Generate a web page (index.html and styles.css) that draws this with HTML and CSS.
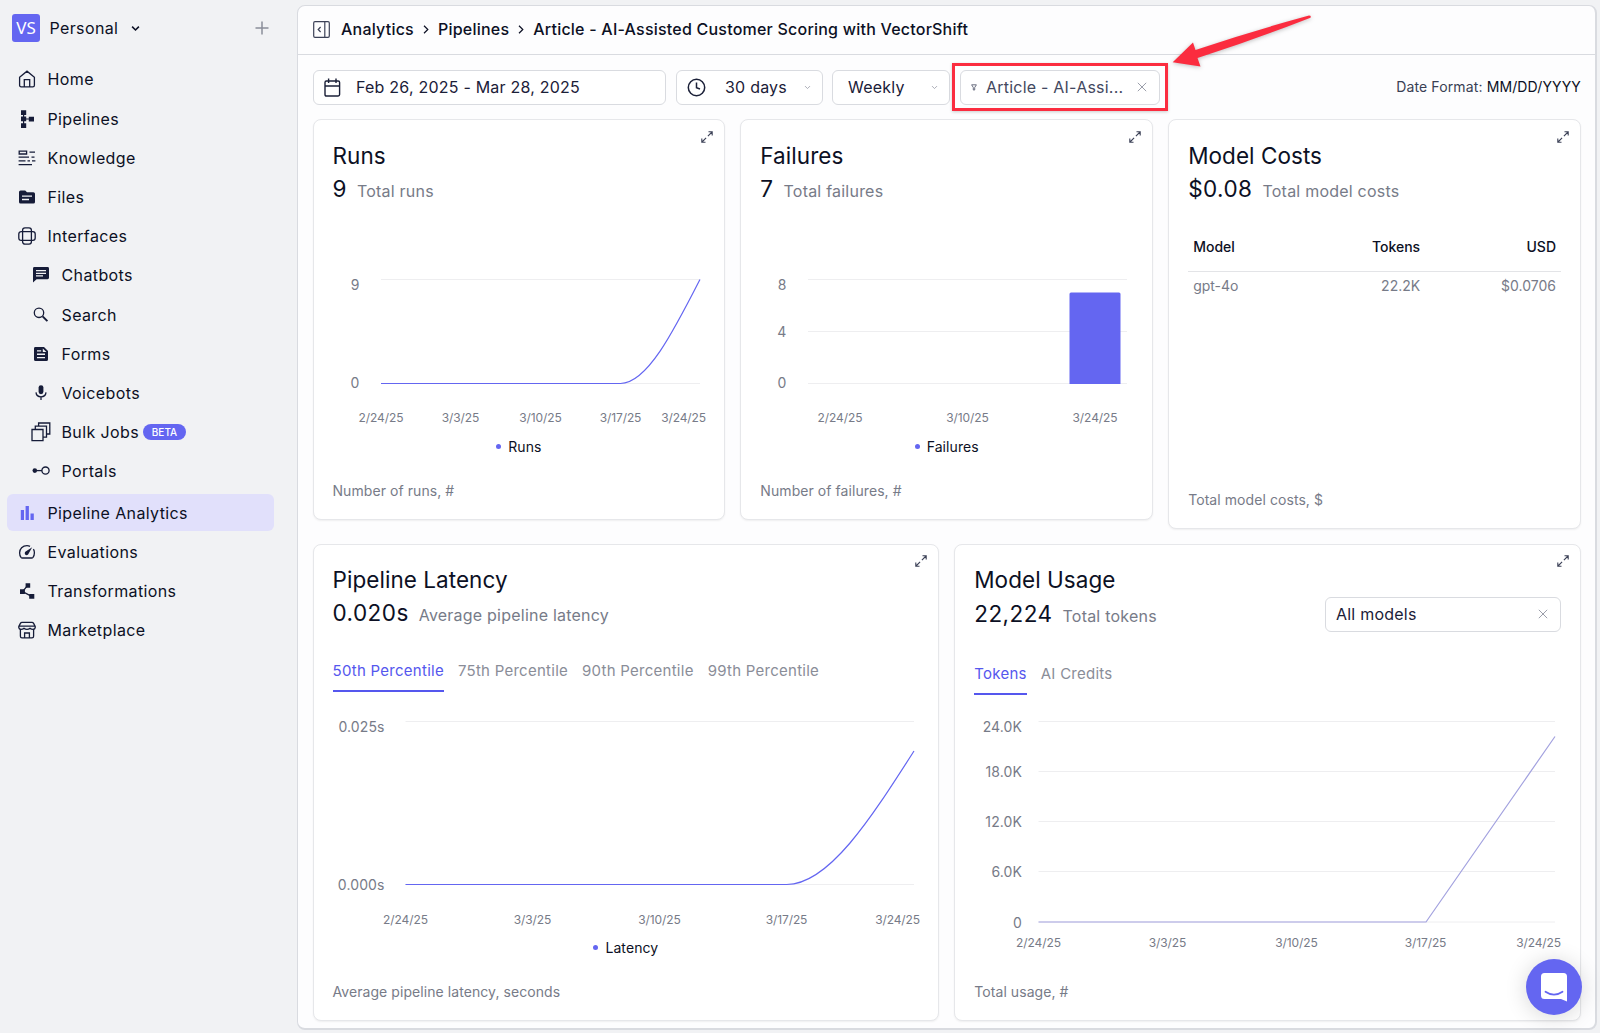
FILE: index.html
```html
<!DOCTYPE html>
<html lang="en">
<head>
    <meta charset="UTF-8">
    <meta name="viewport" content="width=device-width, initial-scale=1.0">
    <title>Pipeline Analytics</title>
    <link rel="stylesheet" href="styles.css">
</head>
<body>
    <svg class="sprite" width="0" height="0">
        <symbol id="expand" viewBox="0 0 12 12">
            <path d="M7.5 .8H11.2V4.5M11 1L6.9 5.1M.8 7.5V11.2H4.5M1 11L5.1 6.9"/>
        </symbol>
        <symbol id="close" viewBox="0 0 10 10">
            <path d="M.8 .8L9.2 9.2M9.2 .8L.8 9.2"/>
        </symbol>
        <symbol id="chevron" viewBox="0 0 8 6">
            <path d="M1 1.3L4 4.3L7 1.3"/>
        </symbol>
    </svg>

    <aside class="sidebar">
        <div class="workspace">
            <span class="logo">VS</span>
            <span class="workspace-name">Personal</span>
            <svg class="workspace-chevron" width="9" height="7"><use href="#chevron"/></svg>
            <svg class="workspace-add" width="14" height="14" viewBox="0 0 14 14"><path d="M7 .5V13.5M.5 7H13.5"/></svg>
        </div>
        <nav>
            <a class="nav-item">
                <svg class="line" viewBox="0 0 18 18"><path d="M1.6 7.2L9 1.2L16.4 7.2V15.2Q16.4 16.8 14.8 16.8H3.2Q1.6 16.8 1.6 15.2ZM6.3 16.8V9.6H11.7V16.8"/></svg>
                <span>Home</span>
            </a>
            <a class="nav-item">
                <svg class="solid" viewBox="0 0 18 18"><path d="M3 .3H8.2V5H6.2V6.6H8.2V8.4H10.8V6.8H16V11.4H10.8V9.6H8.2V11.3H6.2V13.2H8.2V17.9H3V13.2H5V11.3H3V6.6H5V5H3Z"/></svg>
                <span>Pipelines</span>
            </a>
            <a class="nav-item">
                <svg class="line" viewBox="0 0 18 18"><path d="M1.2 2.2H8.6V5H1.2ZM11.5 3.2H17M.6 8.2H11M13.5 8.2H16.5M.6 11.8H7.5M9.5 11.8H12M14 11.8H17.4M.6 15.6H14"/></svg>
                <span>Knowledge</span>
            </a>
            <a class="nav-item">
                <svg class="solid" viewBox="0 0 18 18"><path fill-rule="evenodd" d="M2.6 2.4H7.2L9 4.2H15.4Q17 4.2 17 5.8V14Q17 15.6 15.4 15.6H2.6Q1 15.6 1 14V4Q1 2.4 2.6 2.4ZM4 7.4V8.8H14V7.4ZM4 10.8V12.2H11V10.8Z"/></svg>
                <span>Files</span>
            </a>
            <a class="nav-item">
                <svg class="line" viewBox="0 0 18 18"><rect x="4.6" y=".8" width="8.8" height="16.4" rx="2.4"/><rect x=".8" y="4.6" width="16.4" height="8.8" rx="2.4"/></svg>
                <span>Interfaces</span>
            </a>
            <a class="nav-item sub">
                <svg class="solid" viewBox="0 0 18 18"><path fill-rule="evenodd" d="M2.4 1H15.6Q17 1 17 2.4V11.8Q17 13.2 15.6 13.2H4.6L1 16.6V2.4Q1 1 2.4 1ZM4 4V5.2H14V4ZM4 6.7V7.9H14V6.7ZM4 9.3V10.5H11V9.3Z"/></svg>
                <span>Chatbots</span>
            </a>
            <a class="nav-item sub">
                <svg class="line" viewBox="0 0 18 18"><circle cx="7" cy="6.8" r="4.7"/><path d="M10.6 10.4L15.4 15.2" stroke-width="1.9"/></svg>
                <span>Search</span>
            </a>
            <a class="nav-item sub">
                <svg class="solid" viewBox="0 0 18 18"><path fill-rule="evenodd" d="M3.4 2H12L16 6V14.4Q16 16 14.4 16H3.6Q2 16 2 14.4V3.4Q2 2 3.4 2ZM5 5.2V6.5H9.2V5.2ZM5 8.6V9.9H13V8.6ZM5 11.9V13.2H13V11.9ZM10.8 3.4V7H14.4Z"/></svg>
                <span>Forms</span>
            </a>
            <a class="nav-item sub">
                <svg class="line" viewBox="0 0 18 18"><rect class="filled" x="6.6" y="1.2" width="4.8" height="9" rx="2.4"/><path d="M4 8.4Q4.4 12.8 9 12.8Q13.6 12.8 14 8.4M9 12.8V16"/></svg>
                <span>Voicebots</span>
            </a>
            <a class="nav-item sub">
                <svg class="line wide" viewBox="0 0 20 20"><path d="M1 7.5H12V18.6H1ZM4.3 7.5V4.2H15.5V15.2H12M7.6 4.2V1H18.8V12H15.5"/></svg>
                <span>Bulk Jobs</span>
                <em class="badge">BETA</em>
            </a>
            <a class="nav-item sub">
                <svg class="line" viewBox="0 0 18 18"><circle class="filled" cx="2.8" cy="8.6" r="2.3"/><path d="M4 8.6H10"/><circle cx="13.5" cy="8.6" r="3.6"/></svg>
                <span>Portals</span>
            </a>
            <a class="nav-item active">
                <svg class="solid" viewBox="0 0 18 18"><path d="M2.8 6H6V16H2.8ZM7.6 2H10.9V16H7.6ZM12.5 9.5H15.8V16H12.5Z"/></svg>
                <span>Pipeline Analytics</span>
            </a>
            <a class="nav-item">
                <svg class="line" viewBox="0 0 18 18"><path d="M12 3.3Q10.6 2.6 9 2.6C4.5 2.6 1.6 6 1.6 9.8Q1.6 12.6 3 14.4Q3.5 15 4.4 15H13.6Q14.5 15 15 14.4Q16.4 12.6 16.4 9.8Q16.4 7.8 15.4 6.2"/><path class="filled" d="M14.2 4.2L10.4 11A1.9 1.9 0 1 1 7.7 8.6Z"/></svg>
                <span>Evaluations</span>
            </a>
            <a class="nav-item">
                <svg class="line" viewBox="0 0 18 18"><path d="M9.7 3.4L4.6 9.6L13.6 14.4"/><path class="filled" d="M7.6 1.2H12.2V5.7H7.6ZM2 7.2H6.9V11.9H2ZM11.2 12H16.3V16.8H11.2Z"/></svg>
                <span>Transformations</span>
            </a>
            <a class="nav-item">
                <svg class="line" viewBox="0 0 18 18"><path d="M4 1.4H14Q15 1.4 15.6 2.4L17.2 5.4V6.6Q17 8.2 15 8.4Q13.4 8.4 12 7.4Q10.6 8.4 9 8.4Q7.4 8.4 6 7.4Q4.6 8.4 3 8.4Q1 8.2 .8 6.6V5.4L2.4 2.4Q3 1.4 4 1.4ZM.9 5.2H17M2.4 8.6V15.2Q2.4 16.9 4 16.9H14Q15.6 16.9 15.6 15.2V8.6M6.6 16.9V12H11.4V16.9"/></svg>
                <span>Marketplace</span>
            </a>
        </nav>
    </aside>

    <main class="panel">
        <header class="breadcrumbs">
            <svg class="collapse" width="17" height="17" viewBox="0 0 17 17"><path d="M.7 2Q.7 .7 2 .7H15Q16.3 .7 16.3 2V15Q16.3 16.3 15 16.3H2Q.7 16.3 .7 15ZM11.8 .7V16.3M7.6 6L5.2 8.5L7.6 11"/></svg>
            <span>Analytics</span>
            <svg class="crumb-sep" width="6" height="9" viewBox="0 0 6 9"><path d="M1 .8L4.8 4.5L1 8.2"/></svg>
            <span>Pipelines</span>
            <svg class="crumb-sep" width="6" height="9" viewBox="0 0 6 9"><path d="M1 .8L4.8 4.5L1 8.2"/></svg>
            <span>Article - AI-Assisted Customer Scoring with VectorShift</span>
        </header>

        <div class="toolbar">
            <div class="field date-range">
                <svg width="17" height="19" viewBox="0 0 17 19"><path d="M2.4 3H14.2Q15.6 3 15.6 4.4V16.6Q15.6 18 14.2 18H2.4Q1 18 1 16.6V4.4Q1 3 2.4 3ZM1 8H15.6M4.6 .5V5M12 .5V5"/></svg>
                <span>Feb 26, 2025 - Mar 28, 2025</span>
            </div>
            <div class="field period">
                <svg width="19" height="19" viewBox="0 0 19 19"><circle cx="9.5" cy="9.5" r="8.2"/><path d="M9.5 4.5V9.8L13 11"/></svg>
                <span>30 days</span>
                <svg class="arrow" width="7" height="5"><use href="#chevron"/></svg>
            </div>
            <div class="field interval">
                <span>Weekly</span>
                <svg class="arrow" width="7" height="5"><use href="#chevron"/></svg>
            </div>
            <div class="field filter">
                <svg class="funnel" width="6" height="7" viewBox="0 0 6 7"><path d="M.6 .8H5.4L3.7 3.5V6H2.3V3.5Z"/></svg>
                <span>Article - AI-Assi...</span>
                <svg class="clear" width="10" height="10"><use href="#close"/></svg>
                <div class="callout-frame"></div>
                <svg class="callout-arrow" width="150" height="62" viewBox="0 0 150 62"><path d="M4.7 53.3L25 33.5L27.5 41Q84 22 141 6.5Q143.5 6.5 142.5 8.7Q88 30 29.5 49L32.5 57.5Z"/></svg>
            </div>
            <div class="date-format">Date Format: <b>MM/DD/YYYY</b></div>
        </div>

        <div class="cards row-three">
            <section class="card">
                <svg class="expand"><use href="#expand"/></svg>
                <h2>Runs</h2>
                <div class="total"><strong>9</strong><span>Total runs</span></div>
                <svg class="chart chart-sm" width="372" height="160">
                    <path class="grid" d="M48 9.5H367M48 113.5H367"/>
                    <path class="series" d="M48 113.5H287.5C314 113.5 340.5 61.4 367 9.5"/>
                    <g class="y-axis"><text x="26.5" y="19.5">9</text><text x="26.5" y="118">0</text></g>
                    <g class="x-axis">
                        <text x="48" y="152">2/24/25</text>
                        <text x="127.5" y="152">3/3/25</text>
                        <text x="207.5" y="152">3/10/25</text>
                        <text x="287.5" y="152">3/17/25</text>
                        <text class="last" x="373" y="152">3/24/25</text>
                    </g>
                </svg>
                <div class="legend"><i></i>Runs</div>
                <footer>Number of runs, #</footer>
            </section>

            <section class="card">
                <svg class="expand"><use href="#expand"/></svg>
                <h2>Failures</h2>
                <div class="total"><strong>7</strong><span>Total failures</span></div>
                <svg class="chart chart-sm" width="372" height="160">
                    <path class="grid" d="M48 9.5H367M48 61.5H367M48 113.5H367"/>
                    <path class="bar" d="M309.5 114V24Q309.5 22.5 311 22.5H359Q360.5 22.5 360.5 24V114Z"/>
                    <g class="y-axis"><text x="26.5" y="19.5">8</text><text x="26.5" y="67">4</text><text x="26.5" y="118">0</text></g>
                    <g class="x-axis">
                        <text x="80" y="152">2/24/25</text>
                        <text x="207.5" y="152">3/10/25</text>
                        <text x="335" y="152">3/24/25</text>
                    </g>
                </svg>
                <div class="legend"><i></i>Failures</div>
                <footer>Number of failures, #</footer>
            </section>

            <section class="card costs">
                <svg class="expand"><use href="#expand"/></svg>
                <h2>Model Costs</h2>
                <div class="total"><strong>$0.08</strong><span>Total model costs</span></div>
                <table>
                    <thead>
                        <tr><th>Model</th><th>Tokens</th><th>USD</th></tr>
                    </thead>
                    <tbody>
                        <tr><td>gpt-4o</td><td>22.2K</td><td>$0.0706</td></tr>
                    </tbody>
                </table>
                <footer>Total model costs, $</footer>
            </section>
        </div>

        <div class="cards row-two">
            <section class="card">
                <svg class="expand"><use href="#expand"/></svg>
                <h2>Pipeline Latency</h2>
                <div class="total"><strong>0.020s</strong><span>Average pipeline latency</span></div>
                <div class="tabs">
                    <span class="selected">50th Percentile</span>
                    <span>75th Percentile</span>
                    <span>90th Percentile</span>
                    <span>99th Percentile</span>
                </div>
                <svg class="chart chart-latency" width="586" height="220">
                    <path class="grid" d="M72.5 11.5H581M72.5 174.5H581"/>
                    <path class="series" d="M72.5 174.5H453.7C496 174.5 538.5 107.5 581 41"/>
                    <g class="y-axis"><text x="51.5" y="22">0.025s</text><text x="51.5" y="180">0.000s</text></g>
                    <g class="x-axis">
                        <text x="72.5" y="213.5">2/24/25</text>
                        <text x="199.5" y="213.5">3/3/25</text>
                        <text x="326.5" y="213.5">3/10/25</text>
                        <text x="453.5" y="213.5">3/17/25</text>
                        <text class="last" x="587" y="213.5">3/24/25</text>
                    </g>
                </svg>
                <div class="legend"><i></i>Latency</div>
                <footer>Average pipeline latency, seconds</footer>
            </section>

            <section class="card">
                <svg class="expand"><use href="#expand"/></svg>
                <h2>Model Usage</h2>
                <div class="total usage-total">
                    <strong>22,224</strong><span>Total tokens</span>
                    <div class="field model-select">
                        <span>All models</span>
                        <svg class="clear" width="10" height="10"><use href="#close"/></svg>
                    </div>
                </div>
                <div class="tabs">
                    <span class="selected">Tokens</span>
                    <span>AI Credits</span>
                </div>
                <svg class="chart chart-usage" width="586" height="250">
                    <path class="grid" d="M64.5 11.5H581M64.5 61.5H581M64.5 111.5H581M64.5 161.5H581M64.5 212H581"/>
                    <path class="series faded" d="M64.5 212H452L581 26.5"/>
                    <g class="y-axis">
                        <text x="48" y="22">24.0K</text>
                        <text x="48" y="67">18.0K</text>
                        <text x="48" y="117">12.0K</text>
                        <text x="48" y="167">6.0K</text>
                        <text x="48" y="217.5">0</text>
                    </g>
                    <g class="x-axis">
                        <text x="64.5" y="237">2/24/25</text>
                        <text x="193.5" y="237">3/3/25</text>
                        <text x="322.5" y="237">3/10/25</text>
                        <text x="451.5" y="237">3/17/25</text>
                        <text class="last" x="587" y="237">3/24/25</text>
                    </g>
                </svg>
                <footer>Total usage, #</footer>
            </section>
        </div>
    </main>

    <button class="chat-button">
        <svg width="26" height="29" viewBox="0 0 26 29"><path class="bubble" d="M3.5 0H22.5Q26 0 26 3.5V28.5L20 26H3.5Q0 26 0 22.5V3.5Q0 0 3.5 0Z"/><path class="smile" d="M4.5 18.8Q13 24.6 21.5 18.8"/></svg>
    </button>
</body>
</html>
```
FILE: styles.css
```css
:root {
    --page-bg: #f1f2f4;
    --panel-bg: #fdfdfe;
    --border-color: #d9dbe0;
    --card-border: #e6e7ea;
    --text-color: #0c1024;
    --muted-color: #777b88;
    --icon-color: #161c38;
    --accent: #6466f1;
    --callout: #fb2c3f;
}

* {
    box-sizing: border-box;
    margin: 0;
    padding: 0;
}

body {
    display: flex;
    height: 1033px;
    overflow: hidden;
    background-color: var(--page-bg);
    color: var(--text-color);
    font-family: Inter, sans-serif;
    font-size: 16px;
    letter-spacing: 0.22px;
}

svg {
    flex: none;
    fill: none;
    stroke: currentColor;
}

.sprite {
    position: absolute;
}

/* Sidebar */
.sidebar {
    flex: none;
    width: 297px;
    padding: 14px 23px 0 7px;
    letter-spacing: 0.38px;
}

.workspace {
    display: flex;
    align-items: center;
    height: 28px;
    margin-bottom: 18.9px;
    padding: 0 5px;
}

.logo {
    width: 28px;
    height: 28px;
    margin-right: 9.5px;
    border-radius: 3px;
    background: var(--accent);
    color: white;
    font-family: "Noto Sans", sans-serif;
    font-size: 17px;
    line-height: 28px;
    letter-spacing: 0;
    text-align: center;
}

.workspace-chevron {
    margin-left: 13px;
    stroke-width: 1.4;
}

.workspace-add {
    margin-left: auto;
    color: #8b8e99;
    stroke-width: 1.5;
}

.nav-item {
    display: flex;
    align-items: center;
    gap: 11.5px;
    height: 37.2px;
    margin-bottom: 2px;
    padding-left: 11px;
    border-radius: 6px;
}

.nav-item svg {
    width: 18px;
    height: 18px;
    color: var(--icon-color);
    stroke-width: 1.3;
}

.nav-item svg.solid,
.nav-item .filled {
    fill: currentColor;
    stroke: none;
}

.nav-item svg.wide {
    width: 20px;
    height: 20px;
    margin: 0 -1px;
}

.nav-item.sub {
    padding-left: 25px;
}

.nav-item.active {
    margin-top: 4.2px;
    background: #e1e0fb;
}

.nav-item.active svg {
    color: var(--accent);
}

.badge {
    width: 43px;
    height: 16px;
    margin-left: -7.5px;
    border-radius: 8px;
    background: var(--accent);
    color: white;
    font-size: 10px;
    font-style: normal;
    font-weight: 500;
    line-height: 16px;
    letter-spacing: 0;
    text-align: center;
}

/* Main panel */
.panel {
    flex: none;
    width: 1300px;
    height: 1025px;
    margin-top: 5px;
    border: 1.5px solid var(--border-color);
    border-right-width: 2px;
    border-bottom-width: 2px;
    border-radius: 8px;
    background: var(--panel-bg);
}

.breadcrumbs {
    display: flex;
    align-items: center;
    height: 49px;
    padding: 0 0 2px 15px;
    border-bottom: 1px solid var(--border-color);
    font-weight: 500;
}

.breadcrumbs .collapse {
    margin-right: 11px;
    color: #3c4157;
    stroke-width: 1.2;
}

.crumb-sep {
    margin: 0 9px;
    stroke-width: 1.2;
}

.toolbar {
    display: flex;
    align-items: center;
    height: 35px;
    margin: 15px 14px 14px 15px;
}

.field {
    display: flex;
    align-items: center;
    height: 35px;
    border: 1px solid var(--border-color);
    border-radius: 6px;
    background: white;
    color: #1b2038;
}

.toolbar .field {
    padding-bottom: 1px;
}

.date-range {
    width: 353px;
    margin-right: 10px;
    padding-left: 10px;
}

.date-range svg {
    margin-right: 15px;
    stroke-width: 1.4;
}

.period {
    width: 147px;
    margin-right: 9px;
    padding: 0 11px 0 10px;
}

.period > svg:first-child {
    margin-right: 19px;
    stroke-width: 1.5;
}

.interval {
    width: 118px;
    margin-right: 10px;
    padding: 0 11px 0 15px;
}

.field .arrow,
.field .clear {
    margin-left: auto;
    color: #9b9eaa;
}

.filter {
    position: relative;
    width: 200px;
    padding: 0 12px 0 10px;
    color: #434860;
}

.funnel {
    margin-right: 9px;
    color: #6b6f80;
}

.callout-frame {
    position: absolute;
    inset: -8px -9px -7px -9px;
    border: 3px solid var(--callout);
    box-shadow: 0 1px 3px rgba(0, 0, 0, 0.2);
}

.callout-arrow {
    position: absolute;
    left: 207px;
    top: -62px;
    fill: var(--callout);
    stroke: none;
    filter: drop-shadow(0 1px 2px rgba(0, 0, 0, 0.25));
}

.date-format {
    margin-left: auto;
    padding-bottom: 2px;
    color: #3a3f54;
    font-size: 14px;
    letter-spacing: 0.13px;
}

.date-format b {
    color: var(--text-color);
    font-weight: 400;
}

/* Cards */
.cards {
    display: grid;
    gap: 15px;
    align-items: start;
    margin: 0 14px 15px 14.5px;
}

.row-three {
    grid-template-columns: repeat(3, minmax(0, 1fr));
}

.row-two {
    grid-template-columns: repeat(2, minmax(0, 1fr));
}

.card {
    position: relative;
    display: flex;
    flex-direction: column;
    height: 401px;
    padding: 21px 19px 17px;
    border: 1px solid var(--card-border);
    border-radius: 8px;
    background: white;
    box-shadow: 0 1px 2px rgba(0, 0, 0, 0.06);
}

.card.costs {
    height: 410px;
}

.row-two .card {
    height: 477px;
    padding-top: 20px;
}

.expand {
    position: absolute;
    top: 11px;
    right: 11px;
    width: 12px;
    height: 12px;
    color: #3c4157;
    stroke-width: 1.1;
}

.row-two .expand {
    top: 10px;
}

.card h2 {
    font-size: 22.5px;
    font-weight: 400;
    line-height: 30px;
    letter-spacing: 0.05px;
}

.total {
    display: flex;
    align-items: baseline;
    height: 36px;
    line-height: 36px;
}

.total strong {
    margin-right: 10px;
    font-size: 22.5px;
    font-weight: 400;
    letter-spacing: 0.45px;
}

.total > span {
    color: var(--muted-color);
}

.usage-total {
    height: 38px;
    line-height: 38px;
}

.model-select {
    align-self: center;
    width: 236px;
    margin-left: auto;
    padding: 0 12px 0 10px;
}

.card footer {
    margin-top: auto;
    color: var(--muted-color);
    font-size: 14px;
    line-height: 22px;
    letter-spacing: 0.07px;
}

.legend {
    display: flex;
    align-items: center;
    justify-content: center;
    height: 20px;
    margin-top: 6px;
    font-size: 14px;
    letter-spacing: 0.1px;
}

.legend i {
    width: 5px;
    height: 5px;
    margin-right: 7px;
    border-radius: 50%;
    background: var(--accent);
}

.tabs {
    display: flex;
    gap: 14px;
    margin-top: 30px;
    color: #8a8d98;
    font-size: 15px;
    line-height: 20px;
    letter-spacing: 0.26px;
}

.tabs span {
    height: 31px;
}

.usage-total + .tabs {
    margin-top: 31px;
}

.tabs .selected {
    border-bottom: 2px solid #5557ee;
    color: #5557ee;
}

/* Charts */
.chart {
    overflow: visible;
}

.chart-sm {
    margin-top: 63px;
}

.chart-latency {
    margin-top: 18px;
}

.chart-latency + .legend {
    margin-top: 7px;
}

.chart-usage {
    margin-top: 15px;
}

.grid {
    stroke: #eeeef0;
}

.series {
    stroke: #6466f1;
    stroke-width: 1.2;
}

.series.faded {
    stroke: #a3a2df;
}

.bar {
    fill: #6466f1;
    stroke: none;
}

.chart text {
    fill: #777b88;
    stroke: none;
}

.y-axis {
    font-size: 14px;
    letter-spacing: 0.1px;
    text-anchor: end;
}

.x-axis {
    font-size: 12px;
    letter-spacing: -0.1px;
    text-anchor: middle;
}

.x-axis .last {
    text-anchor: end;
}

/* Costs table */
table {
    width: 100%;
    margin-top: 27px;
    border-collapse: collapse;
    font-size: 14px;
    letter-spacing: 0;
    table-layout: fixed;
}

th,
td {
    width: 127px;
    padding: 0 5px;
    text-align: right;
}

th:first-child,
td:first-child {
    width: 110px;
    text-align: left;
}

th:last-child,
td:last-child {
    width: auto;
}

th {
    height: 37px;
    padding-bottom: 11px;
    border-bottom: 1.5px solid #e3e4e7;
    font-weight: 500;
}

td {
    height: 28px;
    color: var(--muted-color);
}

/* Chat launcher */
.chat-button {
    position: fixed;
    right: 18px;
    bottom: 18px;
    display: flex;
    align-items: center;
    justify-content: center;
    width: 56px;
    height: 56px;
    border: none;
    border-radius: 50%;
    background: var(--accent);
    box-shadow: 0 2px 22px rgba(0, 0, 0, 0.16);
}

.chat-button .bubble {
    fill: white;
    stroke: none;
}

.chat-button .smile {
    stroke: var(--accent);
    stroke-width: 1.8;
    stroke-linecap: round;
}
```
